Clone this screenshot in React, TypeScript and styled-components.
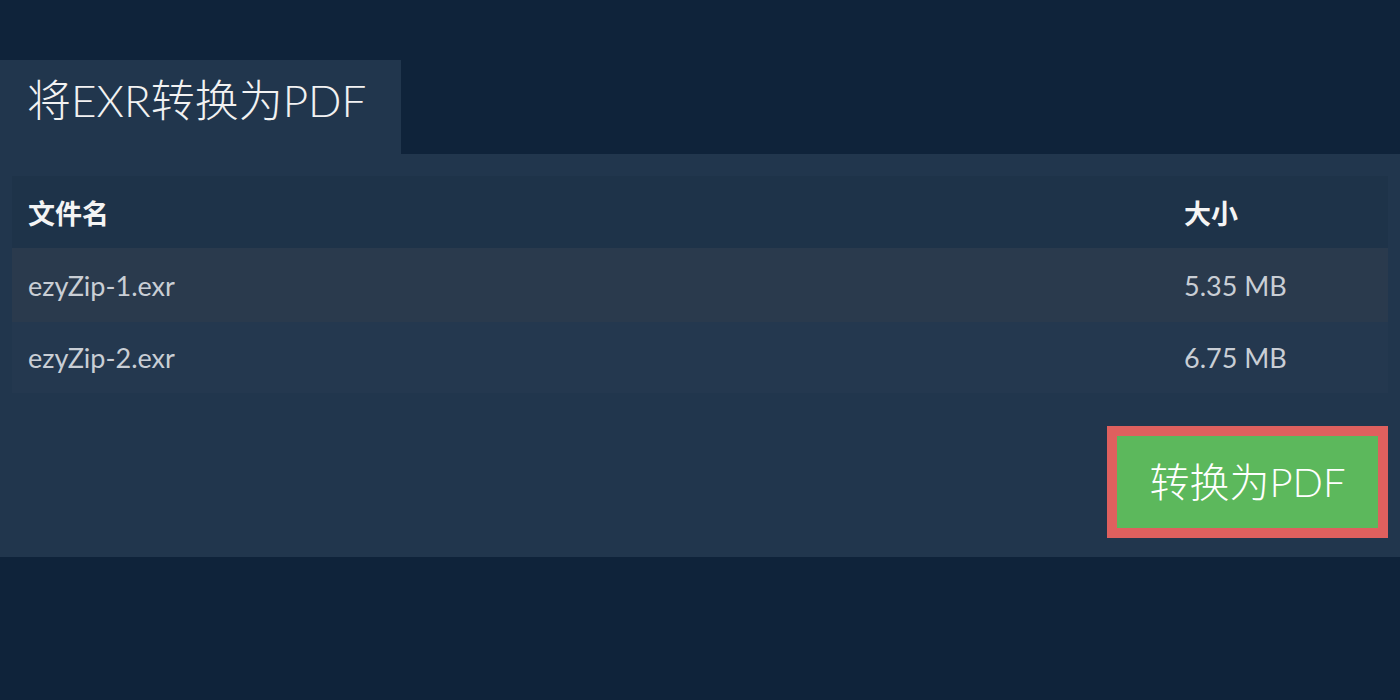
import React from 'react';
import styled, { createGlobalStyle } from 'styled-components';

const GlobalStyle = createGlobalStyle`
  html, body {
    margin: 0;
    padding: 0;
    background: #0f233a;
    font-family: Lato, "Noto Sans CJK SC", sans-serif;
  }
`;

const Page = styled.div`
  width: 1400px;
  height: 700px;
  padding-top: 60px;
  box-sizing: border-box;
  background: #0f233a;
`;

const Tab = styled.div`
  width: 401px;
  height: 94px;
  box-sizing: border-box;
  padding: 14px 0 0 27px;
  background: #21364d;
  color: #f2f2f2;
  font-family: Lato, "Noto Sans CJK SC", sans-serif;
  font-weight: 300;
  font-size: 44px;
  line-height: 52px;
`;

const Panel = styled.div`
  background: #21364d;
  padding: 22px 12px 19px;
  display: flex;
  flex-direction: column;
  gap: 33px;
`;

const Table = styled.div`
  display: flex;
  flex-direction: column;
`;

const Row = styled.div<{ $bg: string; $h: number }>`
  display: grid;
  grid-template-columns: 1156px 1fr;
  align-items: center;
  height: ${p => p.$h}px;
  padding-left: 16px;
  background: ${p => p.$bg};
`;

const HeadCell = styled.div`
  color: #f4f4f4;
  font-weight: 700;
  font-size: 27px;
  font-family: Lato, "Noto Sans CJK SC", sans-serif;
`;

const Cell = styled.div`
  color: #c9ced5;
  font-size: 27px;
  font-family: Lato, "Noto Sans CJK SC", sans-serif;
`;

const Actions = styled.div`
  display: flex;
  justify-content: flex-end;
`;

const ConvertButton = styled.button`
  width: 281px;
  height: 112px;
  box-sizing: border-box;
  border: 10px solid #df605e;
  background: #5cb85c;
  color: #ffffff;
  font-family: Lato, "Noto Sans CJK SC", sans-serif;
  font-weight: 300;
  font-size: 40px;
  padding: 0 0 4px;
  cursor: pointer;
`;

const files = [
  { name: 'ezyZip-1.exr', size: '5.35 MB', bg: '#2a3a4d', h: 74 },
  { name: 'ezyZip-2.exr', size: '6.75 MB', bg: '#24384f', h: 71 },
];

export default function App() {
  return (
    <Page>
      <GlobalStyle />
      <Tab>将EXR转换为PDF</Tab>
      <Panel>
        <Table>
          <Row $bg="#1e3349" $h={72}>
            <HeadCell>文件名</HeadCell>
            <HeadCell>大小</HeadCell>
          </Row>
          {files.map(f => (
            <Row key={f.name} $bg={f.bg} $h={f.h}>
              <Cell>{f.name}</Cell>
              <Cell>{f.size}</Cell>
            </Row>
          ))}
        </Table>
        <Actions>
          <ConvertButton>转换为PDF</ConvertButton>
        </Actions>
      </Panel>
    </Page>
  );
}
